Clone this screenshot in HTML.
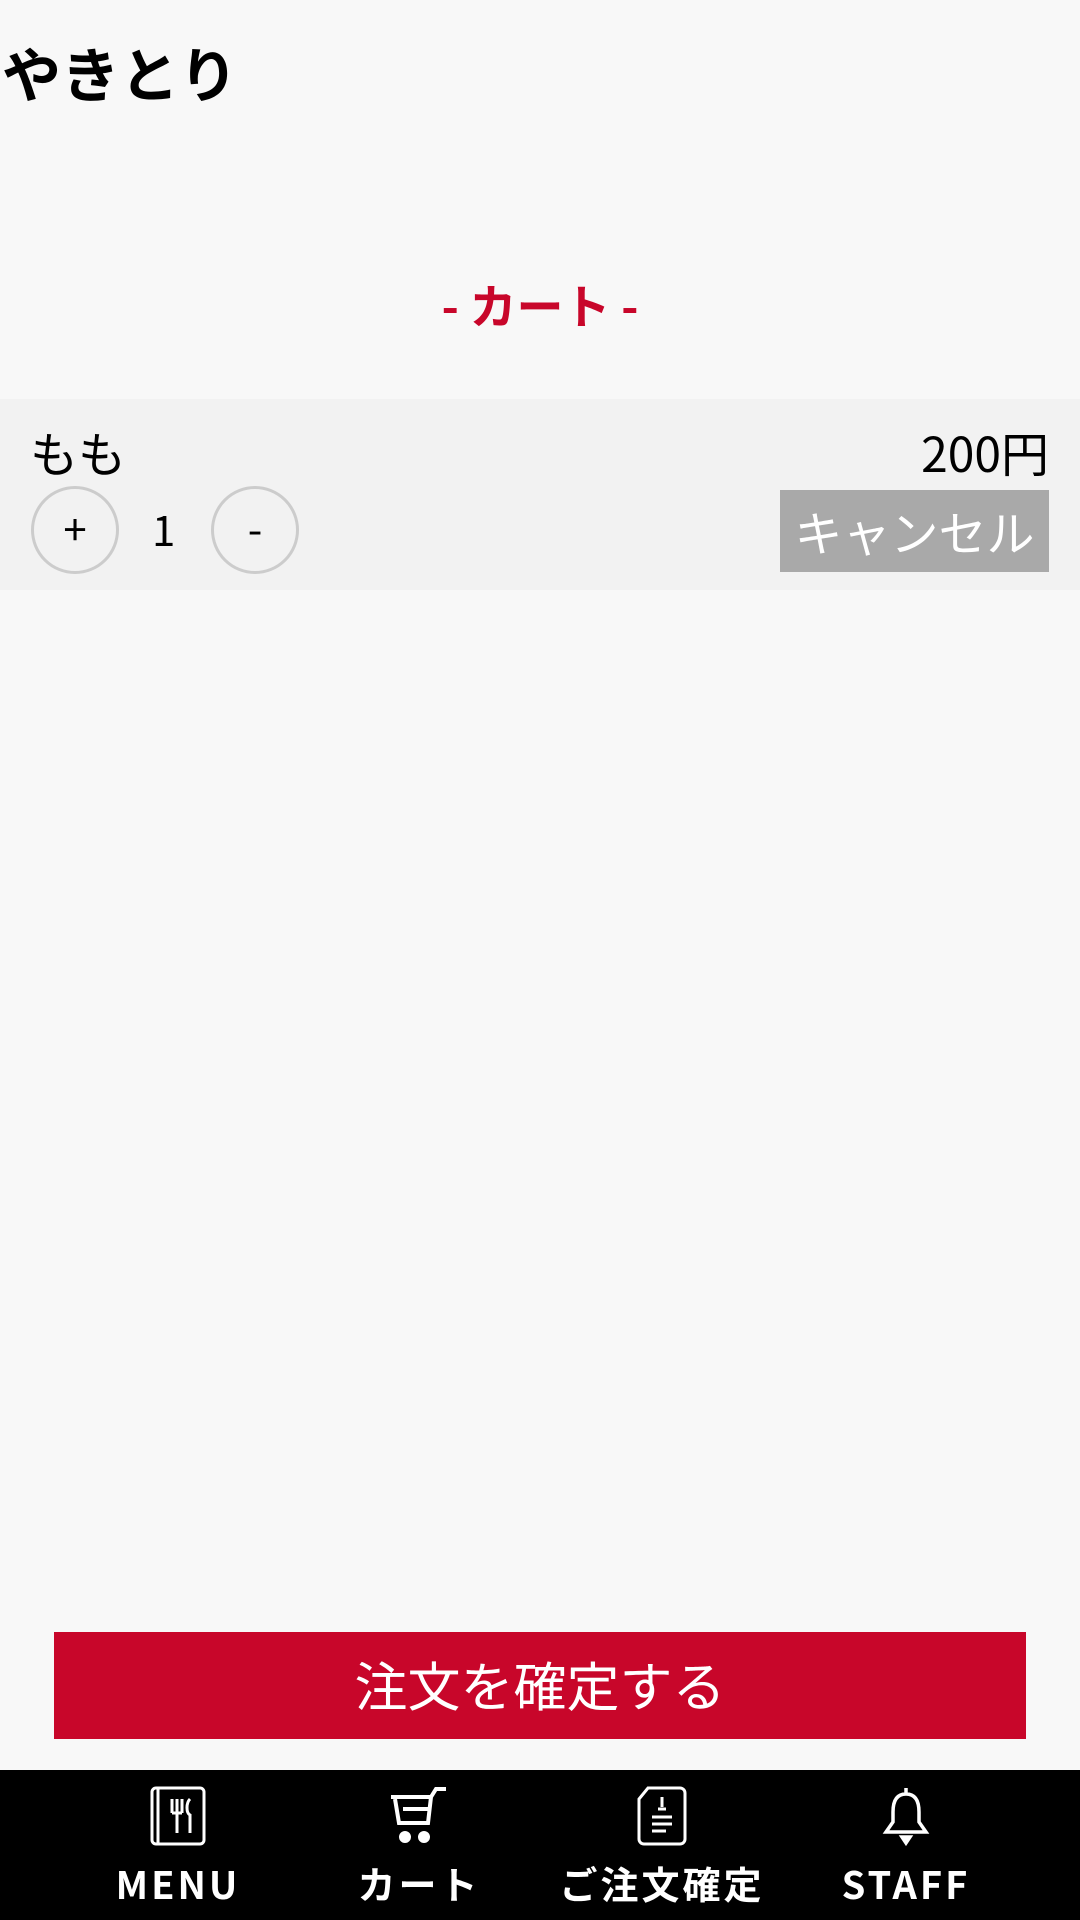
<!DOCTYPE html>
<html><head><meta charset="utf-8"><style>
*{margin:0;padding:0;box-sizing:border-box}
body{width:1080px;height:1920px;background:#f8f8f8;font-family:"Noto Sans CJK JP","Liberation Sans",sans-serif;position:relative;overflow:hidden;color:#000}
.abs{position:absolute}
h1{position:absolute;left:2px;top:32px;font-size:59px;font-weight:bold;line-height:80px}
.ttl{position:absolute;left:0;width:1080px;top:272px;text-align:center;color:#c8062a;font-weight:bold;font-size:47px;line-height:64px}
.row{position:absolute;left:0;top:399px;width:1080px;height:191px;background:#f2f2f2}
.circ{position:absolute;width:88px;height:88px;border:3px solid #ccc;border-radius:50%;text-align:center;line-height:78px;font-size:42px}
.cancel{position:absolute;left:780px;top:490px;width:269px;height:82px;background:#a9a9a9;color:#fff;font-size:48px;line-height:80px;text-align:center}
.btn{position:absolute;left:54px;top:1632px;width:972px;height:107px;background:#c8062a;color:#fff;font-size:53px;line-height:105px;text-align:center}
.nav{position:absolute;left:0;top:1770px;width:1080px;height:150px;background:#000}
.it{position:absolute;top:0;width:240px;text-align:center;color:#fff}
.it svg{position:absolute;top:15px;left:90px}
.it span{position:absolute;top:88px;left:0;width:240px;font-size:38px;font-weight:bold;letter-spacing:3px;line-height:50px}
</style></head><body>
<h1>やきとり</h1>
<div class="ttl">- カート -</div>
<div class="row">
 <div class="abs" style="left:30px;top:22px;font-size:48px;line-height:60px">もも</div>
 <div class="abs" style="right:31px;top:22px;font-size:48px;line-height:60px">200円</div>
 <div class="circ" style="left:31px;top:87px">+</div>
 <div class="abs" style="left:152px;top:100px;font-size:42px;line-height:60px">1</div>
 <div class="circ" style="left:211px;top:87px">-</div>
</div>
<div class="cancel">キャンセル</div>
<div class="btn">注文を確定する</div>
<div class="nav">
 <div class="it" style="left:58px"><svg width="60" height="62" viewBox="0 0 60 62" fill="none" stroke="#fff" stroke-width="3"><rect x="4" y="3" width="52" height="56" rx="4"/><line x1="10" y1="3" x2="10" y2="59"/><path d="M24 14v14M29 14v14M34 14v14M24 28h10M29 28v20"/><path d="M42 14c-4 4-4 14 0 16v18"/></svg><span>MENU</span></div>
 <div class="it" style="left:299px"><svg width="60" height="62" viewBox="0 0 60 62" fill="none" stroke="#fff" stroke-width="4"><path d="M2 12h40l-3 26H10L6 14M42 12l5-8h10M14 24h26"/><circle cx="16" cy="52" r="4" fill="#fff"/><circle cx="35" cy="52" r="4" fill="#fff"/></svg><span>カート</span></div>
 <div class="it" style="left:542px"><svg width="60" height="62" viewBox="0 0 60 62" fill="none" stroke="#fff" stroke-width="3"><path d="M16 3h32a5 5 0 0 1 5 5v46a5 5 0 0 1-5 5H12a5 5 0 0 1-5-5V14z"/><path d="M30 12v10M26 24h8M20 32h20M20 39h20M20 46h14"/></svg><span>ご注文確定</span></div>
 <div class="it" style="left:786px"><svg width="60" height="62" viewBox="0 0 60 62" fill="none" stroke="#fff" stroke-width="3.5"><path d="M30 3v6M30 9c-10 0-13 8-13 18v10l-7 10h40l-7-10V27c0-10-3-18-13-18z"/><path d="M26 52h8l-4 6z" fill="#fff"/></svg><span>STAFF</span></div>
</div>
</body></html>
